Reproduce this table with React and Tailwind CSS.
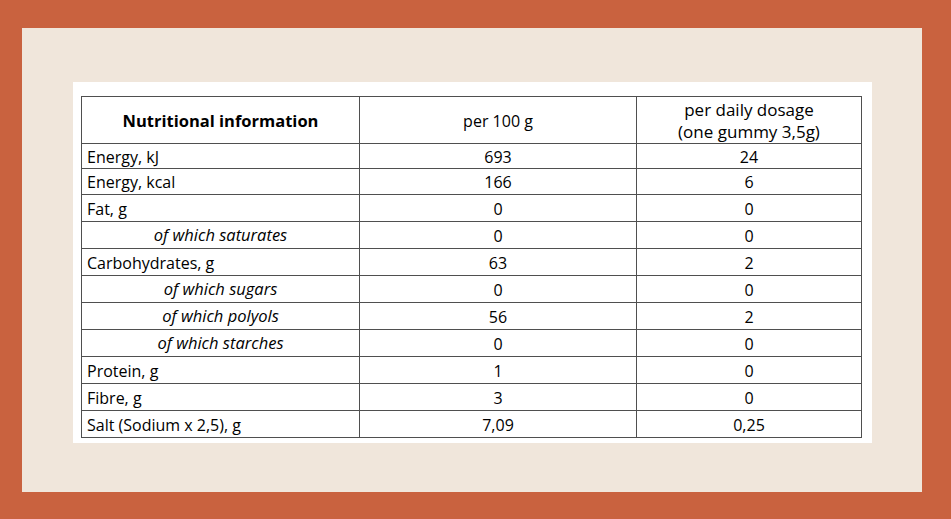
import React from "react";

const rows = [
  { label: "Energy, kJ", per100: "693", daily: "24", h: "h-[25px]" },
  { label: "Energy, kcal", per100: "166", daily: "6", h: "h-[26px]" },
  { label: "Fat, g", per100: "0", daily: "0" },
  { label: "of which saturates", per100: "0", daily: "0", sub: true },
  { label: "Carbohydrates, g", per100: "63", daily: "2" },
  { label: "of which sugars", per100: "0", daily: "0", sub: true },
  { label: "of which polyols", per100: "56", daily: "2", sub: true },
  { label: "of which starches", per100: "0", daily: "0", sub: true },
  { label: "Protein, g", per100: "1", daily: "0" },
  { label: "Fibre, g", per100: "3", daily: "0" },
  { label: "Salt (Sodium x 2,5), g", per100: "7,09", daily: "0,25" },
];

const cell = "border border-[#4f4f4f] leading-none pt-[1px]";

const App = () => {
  return (
    <div className="h-[519px] w-[951px] bg-[#c9623f] pt-[28px] pl-[22px]">
      <div className="w-[900px] h-[464px] bg-[#f0e6db] pt-[54px] pl-[51px]">
        <div className="w-[799px] bg-white pt-[14px] pl-[8px] pb-[5px] font-['Open_Sans',sans-serif] text-[16px] text-black">
          <table className="w-[780px] border-collapse table-fixed">
            <colgroup>
              <col className="w-[278px]" />
              <col className="w-[277px]" />
              <col className="w-[225px]" />
            </colgroup>
            <thead>
              <tr className="h-[47px]">
                {/* header */}
                <th className="border border-[#4f4f4f] leading-none font-bold text-[16.5px] text-center align-middle pt-[2px]">
                  Nutritional information
                </th>
                <th className="border border-[#4f4f4f] leading-none font-normal text-center align-middle pt-[2px]">
                  per 100 g
                </th>
                <th className="border border-[#4f4f4f] font-normal text-[17px] text-center align-middle leading-[22px] pt-[2px]">
                  per daily dosage
                  <br />
                  (one gummy 3,5g)
                </th>
              </tr>
            </thead>
            <tbody>
              {rows.map((r) => (
                <tr key={r.label} className={r.h || "h-[27px]"}>
                  <td
                    className={
                      r.sub
                        ? `${cell} italic text-[16.5px] text-center`
                        : `${cell} pl-[5px]`
                    }
                  >
                    {r.label}
                  </td>
                  <td className={`${cell} text-center`}>{r.per100}</td>
                  <td className={`${cell} text-center`}>{r.daily}</td>
                </tr>
              ))}
            </tbody>
          </table>
        </div>
      </div>
    </div>
  );
};

export default App;
